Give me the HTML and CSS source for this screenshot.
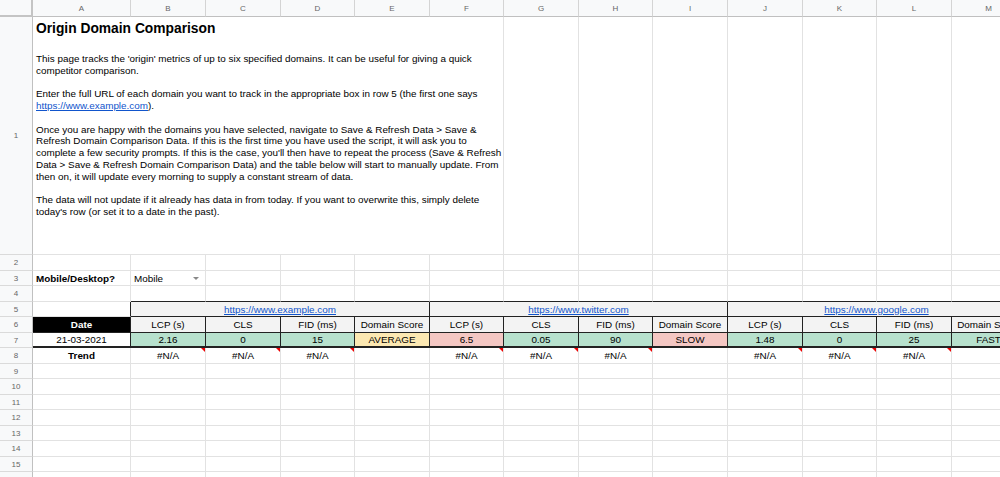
FILE: index.html
```html
<!DOCTYPE html>
<html lang="en">
<head>
    <meta charset="UTF-8">
    <title>Origin Domain Comparison</title>
    <link rel="stylesheet" href="styles.css">
</head>
<body>
    <div class="sheet">
        <!-- column headers -->
        <div class="corner"></div>
        <div class="colhead">A</div><div class="colhead">B</div><div class="colhead">C</div><div class="colhead">D</div><div class="colhead">E</div><div class="colhead">F</div><div class="colhead">G</div><div class="colhead">H</div><div class="colhead">I</div><div class="colhead">J</div><div class="colhead">K</div><div class="colhead">L</div><div class="colhead">M</div>

        <!-- row 1: instructions -->
        <div class="rowhead">1</div>
        <div class="cell intro">
            <div class="title">Origin Domain Comparison</div>
            <p>This page tracks the 'origin' metrics of up to six specified domains. It can be useful for giving a quick<br>competitor comparison.</p>
            <p>Enter the full URL of each domain you want to track in the appropriate box in row 5 (the first one says<br><a href="#">https://www.example.com</a>).</p>
            <p>Once you are happy with the domains you have selected, navigate to Save &amp; Refresh Data &gt; Save &amp;<br>Refresh Domain Comparison Data. If this is the first time you have used the script, it will ask you to<br>complete a few security prompts. If this is the case, you'll then have to repeat the process (Save &amp; Refresh<br>Data &gt; Save &amp; Refresh Domain Comparison Data) and the table below will start to manually update. From<br>then on, it will update every morning to supply a constant stream of data.</p>
            <p>The data will not update if it already has data in from today. If you want to overwrite this, simply delete<br>today's row (or set it to a date in the past).</p>
        </div>
        <div class="cell"></div><div class="cell"></div><div class="cell"></div><div class="cell"></div><div class="cell"></div><div class="cell"></div><div class="cell"></div>

        <!-- row 2 -->
        <div class="rowhead">2</div>
        <div class="cell"></div><div class="cell"></div><div class="cell"></div><div class="cell"></div><div class="cell"></div><div class="cell"></div><div class="cell"></div><div class="cell"></div><div class="cell"></div><div class="cell"></div><div class="cell"></div><div class="cell"></div><div class="cell"></div>

        <!-- row 3: device picker -->
        <div class="rowhead">3</div>
        <div class="cell bold">Mobile/Desktop?</div>
        <div class="cell dropdown">Mobile<span class="arrow"></span></div>
        <div class="cell"></div><div class="cell"></div><div class="cell"></div><div class="cell"></div><div class="cell"></div><div class="cell"></div><div class="cell"></div><div class="cell"></div><div class="cell"></div><div class="cell"></div><div class="cell"></div>

        <!-- row 4 -->
        <div class="rowhead">4</div>
        <div class="cell"></div>
        <div class="cell edge-b"></div><div class="cell edge-b"></div><div class="cell edge-b"></div><div class="cell edge-b"></div><div class="cell edge-b"></div><div class="cell edge-b"></div><div class="cell edge-b"></div><div class="cell edge-b"></div><div class="cell edge-b"></div><div class="cell edge-b"></div><div class="cell edge-b"></div><div class="cell edge-b"></div>

        <!-- row 5: domains -->
        <div class="rowhead">5</div>
        <div class="cell edge-r"></div>
        <div class="cell tb domain"><a href="#">https://www.example.com</a></div>
        <div class="cell tb domain"><a href="#">https://www.twitter.com</a></div>
        <div class="cell tb domain"><a href="#">https://www.google.com</a></div>

        <!-- row 6: headings -->
        <div class="rowhead">6</div>
        <div class="cell tb date-head">Date</div>
        <div class="cell tb head">LCP (s)</div><div class="cell tb head">CLS</div><div class="cell tb head">FID (ms)</div><div class="cell tb head">Domain Score</div>
        <div class="cell tb head">LCP (s)</div><div class="cell tb head">CLS</div><div class="cell tb head">FID (ms)</div><div class="cell tb head">Domain Score</div>
        <div class="cell tb head">LCP (s)</div><div class="cell tb head">CLS</div><div class="cell tb head">FID (ms)</div><div class="cell tb head">Domain Score</div>

        <!-- row 7: today's values -->
        <div class="rowhead">7</div>
        <div class="cell tb val">21-03-2021</div>
        <div class="cell tb val good">2.16</div><div class="cell tb val good">0</div><div class="cell tb val good">15</div><div class="cell tb val ok">AVERAGE</div>
        <div class="cell tb val bad">6.5</div><div class="cell tb val good">0.05</div><div class="cell tb val good">90</div><div class="cell tb val bad">SLOW</div>
        <div class="cell tb val good">1.48</div><div class="cell tb val good">0</div><div class="cell tb val good">25</div><div class="cell tb val good">FAST</div>

        <!-- row 8: trend -->
        <div class="rowhead">8</div>
        <div class="cell center bold">Trend</div>
        <div class="cell center err">#N/A</div><div class="cell center err">#N/A</div><div class="cell center err">#N/A</div><div class="cell"></div>
        <div class="cell center err">#N/A</div><div class="cell center err">#N/A</div><div class="cell center err">#N/A</div><div class="cell"></div>
        <div class="cell center err">#N/A</div><div class="cell center err">#N/A</div><div class="cell center err">#N/A</div><div class="cell"></div>

        <!-- empty rows -->
        <div class="rowhead">9</div>
        <div class="cell"></div><div class="cell"></div><div class="cell"></div><div class="cell"></div><div class="cell"></div><div class="cell"></div><div class="cell"></div><div class="cell"></div><div class="cell"></div><div class="cell"></div><div class="cell"></div><div class="cell"></div><div class="cell"></div>
        <div class="rowhead">10</div>
        <div class="cell"></div><div class="cell"></div><div class="cell"></div><div class="cell"></div><div class="cell"></div><div class="cell"></div><div class="cell"></div><div class="cell"></div><div class="cell"></div><div class="cell"></div><div class="cell"></div><div class="cell"></div><div class="cell"></div>
        <div class="rowhead">11</div>
        <div class="cell"></div><div class="cell"></div><div class="cell"></div><div class="cell"></div><div class="cell"></div><div class="cell"></div><div class="cell"></div><div class="cell"></div><div class="cell"></div><div class="cell"></div><div class="cell"></div><div class="cell"></div><div class="cell"></div>
        <div class="rowhead">12</div>
        <div class="cell"></div><div class="cell"></div><div class="cell"></div><div class="cell"></div><div class="cell"></div><div class="cell"></div><div class="cell"></div><div class="cell"></div><div class="cell"></div><div class="cell"></div><div class="cell"></div><div class="cell"></div><div class="cell"></div>
        <div class="rowhead">13</div>
        <div class="cell"></div><div class="cell"></div><div class="cell"></div><div class="cell"></div><div class="cell"></div><div class="cell"></div><div class="cell"></div><div class="cell"></div><div class="cell"></div><div class="cell"></div><div class="cell"></div><div class="cell"></div><div class="cell"></div>
        <div class="rowhead">14</div>
        <div class="cell"></div><div class="cell"></div><div class="cell"></div><div class="cell"></div><div class="cell"></div><div class="cell"></div><div class="cell"></div><div class="cell"></div><div class="cell"></div><div class="cell"></div><div class="cell"></div><div class="cell"></div><div class="cell"></div>
        <div class="rowhead">15</div>
        <div class="cell"></div><div class="cell"></div><div class="cell"></div><div class="cell"></div><div class="cell"></div><div class="cell"></div><div class="cell"></div><div class="cell"></div><div class="cell"></div><div class="cell"></div><div class="cell"></div><div class="cell"></div><div class="cell"></div>
        <div class="rowhead">16</div>
        <div class="cell"></div><div class="cell"></div><div class="cell"></div><div class="cell"></div><div class="cell"></div><div class="cell"></div><div class="cell"></div><div class="cell"></div><div class="cell"></div><div class="cell"></div><div class="cell"></div><div class="cell"></div><div class="cell"></div>
    </div>
</body>
</html>
```

FILE: styles.css
```css
body {
    margin: 0;
    overflow: hidden;
    background: #fff;
    font-family: "Liberation Sans", Arial, sans-serif;
    color: #000;
}

/* Spreadsheet grid */
.sheet {
    display: grid;
    grid-template-columns: 33px 98px 75px 75px 74px 75px 74px 75px 74px 75px 75px 74px 75px 74px;
    grid-template-rows: 17px 238px 16px 15px 16px 15px 16px 15px 16px 15px 16px 15px 16px 15px 16px 15px 16px;
    width: 1026px;
}
.sheet > div {
    box-sizing: border-box;
    min-width: 0;
}

.corner {
    background: #f8f9fa;
    border-right: 2px solid #c4c4c4;
    border-bottom: 2px solid #c4c4c4;
}
.colhead {
    background: #f8f9fa;
    border-right: 1px solid #d4d4d4;
    border-bottom: 1px solid #c0c0c0;
    color: #666;
    font-size: 8px;
    display: flex;
    align-items: center;
    justify-content: center;
    padding-top: 1px;
}
.rowhead {
    background: #f8f9fa;
    border-right: 1px solid #c0c0c0;
    border-bottom: 1px solid #dadada;
    color: #666;
    font-size: 8px;
    display: flex;
    align-items: center;
    justify-content: center;
}

.cell {
    border-right: 1px solid #e2e2e2;
    border-bottom: 1px solid #e2e2e2;
    font-size: 9.9px;
    padding: 0 3px;
    display: flex;
    align-items: center;
    white-space: nowrap;
    overflow: hidden;
    position: relative;
}
.bold { font-weight: bold; }
.center { justify-content: center; }

a {
    color: #1155cc;
    text-decoration: underline;
}

/* Intro text in A1:F1 */
.intro {
    grid-column: span 6;
    display: block;
    padding: 3px 3px 0;
}
.intro .title {
    font-size: 13.8px;
    font-weight: bold;
    line-height: 18px;
    margin-bottom: 15px;
}
.intro p {
    margin: 0 0 11.75px;
    line-height: 11.75px;
}

/* Dropdown chip */
.dropdown {
    justify-content: space-between;
    padding-right: 6px;
}
.arrow {
    width: 0;
    height: 0;
    border-left: 3px solid transparent;
    border-right: 3px solid transparent;
    border-top: 3px solid #888;
}

/* Comparison table */
.edge-b { border-bottom-color: #222; }
.edge-r { border-right-color: #222; }
.tb {
    border-right-color: #222;
    border-bottom-color: #222;
}
.domain {
    grid-column: span 4;
    background: #f3f3f3;
    justify-content: center;
}
.date-head {
    background: #000;
    color: #fff;
    font-weight: bold;
    justify-content: center;
}
.head {
    background: #f3f3f3;
    justify-content: center;
}
.val {
    justify-content: center;
    border-bottom: 2px solid #222;
}
.good { background: #b7e1cd; }
.ok { background: #fce8b2; }
.bad { background: #f4c7c3; }

/* error marker in the corner */
.err::after {
    content: "";
    position: absolute;
    top: 0;
    right: 0;
    border-top: 4px solid #e00;
    border-left: 4px solid transparent;
}
```
